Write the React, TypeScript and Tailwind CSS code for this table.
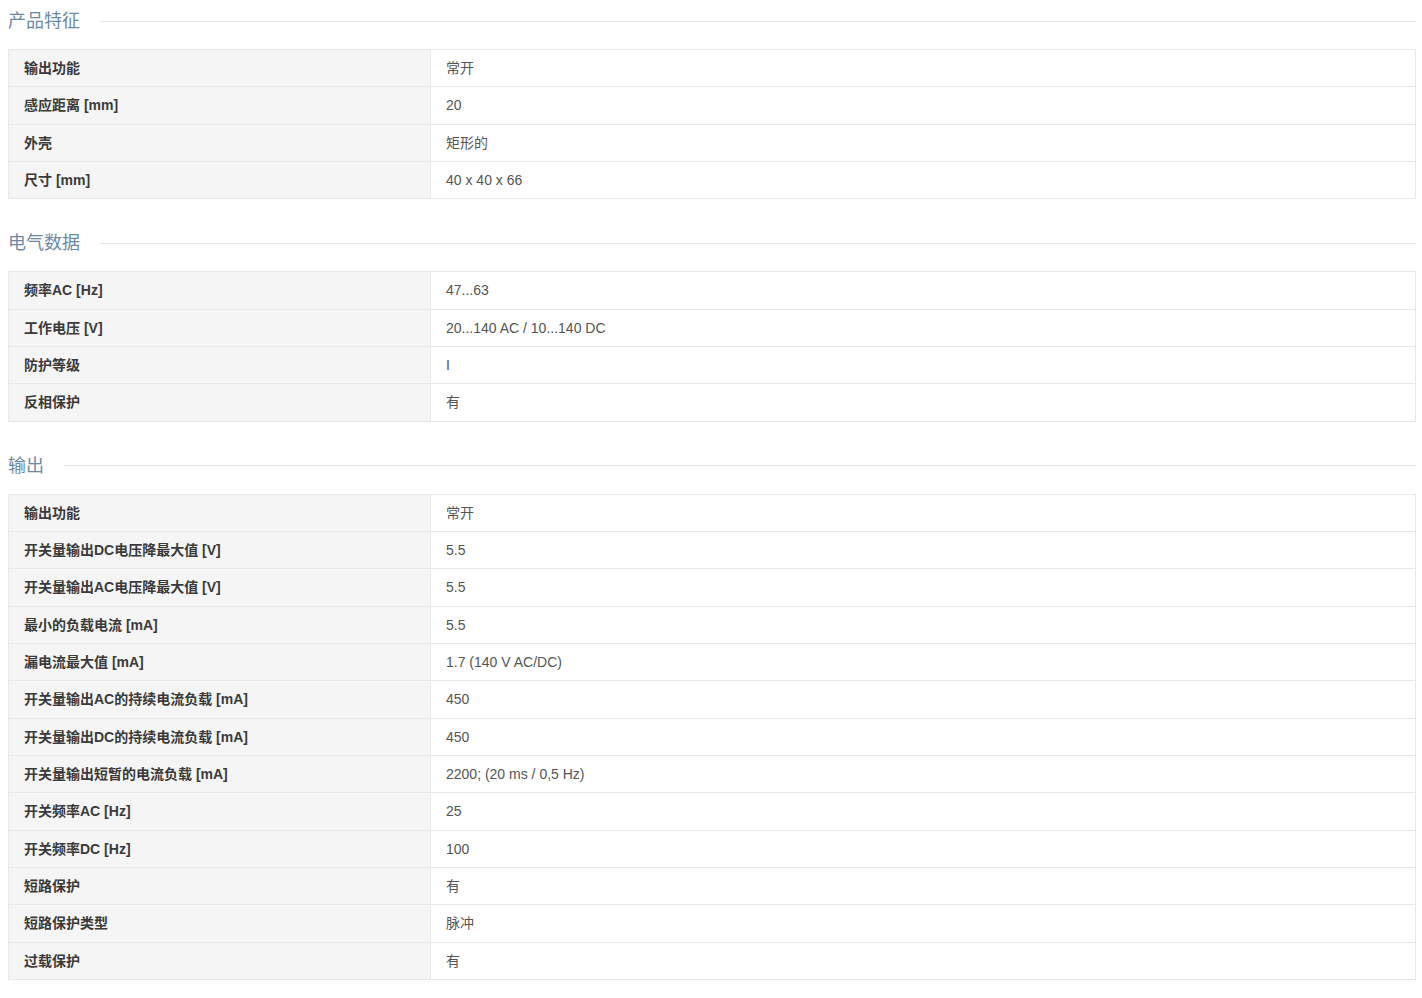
const sections: { title: string; rows: [string, string][] }[] = [
  {
    title: '产品特征',
    rows: [
      ['输出功能', '常开'],
      ['感应距离 [mm]', '20'],
      ['外壳', '矩形的'],
      ['尺寸 [mm]', '40 x 40 x 66'],
    ],
  },
  {
    title: '电气数据',
    rows: [
      ['频率AC [Hz]', '47...63'],
      ['工作电压 [V]', '20...140 AC / 10...140 DC'],
      ['防护等级', 'I'],
      ['反相保护', '有'],
    ],
  },
  {
    title: '输出',
    rows: [
      ['输出功能', '常开'],
      ['开关量输出DC电压降最大值 [V]', '5.5'],
      ['开关量输出AC电压降最大值 [V]', '5.5'],
      ['最小的负载电流 [mA]', '5.5'],
      ['漏电流最大值 [mA]', '1.7 (140 V AC/DC)'],
      ['开关量输出AC的持续电流负载 [mA]', '450'],
      ['开关量输出DC的持续电流负载 [mA]', '450'],
      ['开关量输出短暂的电流负载 [mA]', '2200; (20 ms / 0,5 Hz)'],
      ['开关频率AC [Hz]', '25'],
      ['开关频率DC [Hz]', '100'],
      ['短路保护', '有'],
      ['短路保护类型', '脉冲'],
      ['过载保护', '有'],
    ],
  },
];

export default function App() {
  return (
    <div
      className="bg-white min-h-screen pl-2 pr-[6px] pt-2"
      style={{ fontFamily: '"Liberation Sans", Arial, "Noto Sans CJK SC", sans-serif' }}
    >
      {sections.map((s, i) => (
        <section key={s.title} className={i === 0 ? '' : 'mt-[31px]'}>
          {/* Heading with rule */}
          <div className="flex items-center gap-5 h-[26px]">
            <h2 className="text-[18px] leading-[26px] text-[#6b8aa6] font-normal whitespace-nowrap">{s.title}</h2>
            <div className="flex-1 h-px bg-[#e5e5e5]" />
          </div>

          {/* Spec table */}
          <div className="mt-[15px] border-t border-l border-[#e8e8e8]">
            {s.rows.map(([label, value], j) => (
              <div key={j} className="grid grid-cols-[422px_1fr] border-b border-[#e8e8e8]">
                <div className="bg-[#f5f5f5] border-r border-[#e8e8e8] px-[15px] py-2 text-[14px] leading-[20.33px] font-bold text-[#3a3a3a]">
                  {label}
                </div>
                <div className="border-r border-[#e8e8e8] px-[15px] py-2 text-[14px] leading-[20.33px] text-[#555]">
                  {value}
                </div>
              </div>
            ))}
          </div>
        </section>
      ))}
    </div>
  );
}
